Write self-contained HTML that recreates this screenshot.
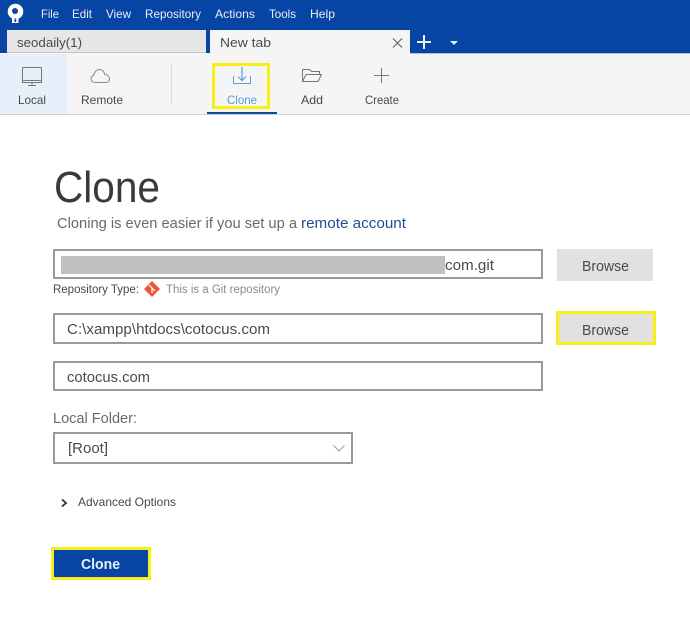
<!DOCTYPE html>
<html lang="en">
<head>
<meta charset="utf-8">
<title>Clone</title>
<style>
html,body{margin:0;padding:0;background:#fff;width:690px;height:618px;overflow:hidden}
svg{display:block}
text{font-family:"Liberation Sans",sans-serif}
</style>
</head>
<body>
<svg width="690" height="618" viewBox="0 0 690 618" xmlns="http://www.w3.org/2000/svg">
<rect width="690" height="618" fill="#fff"/>
<!-- title bar -->
<rect width="690" height="53" fill="#0645a3"/>
<path d="M12 23H18.500V17H12Z" fill="#fff"/>
<circle cx="15.500" cy="11.500" r="7.800" fill="#fff"/>
<circle cx="15" cy="11" r="3" fill="#0645a3"/>
<rect x="14.500" y="18.500" width="1.700" height="3.500" fill="#0645a3"/>
<g fill="#e8eef8" font-size="12">
<text x="41" y="18" textLength="18" lengthAdjust="spacingAndGlyphs">File</text>
<text x="72" y="18" textLength="20" lengthAdjust="spacingAndGlyphs">Edit</text>
<text x="106" y="18" textLength="25" lengthAdjust="spacingAndGlyphs">View</text>
<text x="145" y="18" textLength="56" lengthAdjust="spacingAndGlyphs">Repository</text>
<text x="215" y="18" textLength="40" lengthAdjust="spacingAndGlyphs">Actions</text>
<text x="269" y="18" textLength="27" lengthAdjust="spacingAndGlyphs">Tools</text>
<text x="310" y="18" textLength="25" lengthAdjust="spacingAndGlyphs">Help</text>
</g>
<!-- tabs -->
<rect x="7" y="30" width="199" height="23" fill="#e6e6e6"/>
<rect x="7" y="52" width="199" height="1" fill="#c4c4c4"/>
<text x="17" y="47" font-size="13" fill="#4a4a4a" textLength="65" lengthAdjust="spacingAndGlyphs">seodaily(1)</text>
<rect x="210" y="30" width="200" height="24" fill="#f5f5f6"/>
<text x="220" y="47" font-size="13" fill="#4a4a4a" textLength="51" lengthAdjust="spacingAndGlyphs">New tab</text>
<path d="M393 38.500L402 47.500M402 38.500L393 47.500" stroke="#666" stroke-width="1.200" fill="none"/>
<path d="M424 35V49M417 42H431" stroke="#e8f0fa" stroke-width="2" fill="none"/>
<path d="M450 41H458L454 45Z" fill="#e8f0fa"/>
<!-- toolbar -->
<rect y="53" width="690" height="61" fill="#f5f5f6"/>
<rect x="410" y="53" width="280" height="1" fill="#a9c0e0"/>
<rect y="114" width="690" height="1" fill="#cfcfcf"/>
<rect y="54" width="67" height="60" fill="#e6f0fa"/>
<rect x="171" y="63" width="1" height="42" fill="#dcdcdc"/>
<!-- Local icon -->
<g fill="none" stroke="#777" stroke-width="1">
<rect x="22.500" y="67.500" width="19" height="15"/>
<path d="M22.500 80.500H41.500M32 83V85M28 85.500H36"/>
</g>
<!-- Remote icon -->
<path d="M95 82.500C92.500 82.500 91 80.500 91 78.500C91 76.500 92.500 75.500 93.500 75.500C94.500 71.500 97 69.500 99.500 69.500C102.500 69.500 104 72 104.800 74.500C107.500 74.500 109.500 76.500 109.500 79C109.500 81.500 107.500 82.500 105.500 82.500Z" fill="none" stroke="#888" stroke-width="1"/>
<!-- Clone icon -->
<path d="M242 67V80M238 76.500L242 80.500L246 76.500" fill="none" stroke="#5a9fdc" stroke-width="1.200"/>
<path d="M233.500 76V83.500H250.500V76" fill="none" stroke="#5a9fdc" stroke-width="1"/>
<!-- Add icon -->
<path d="M302.500 81.500V69.500H309.500L311.500 71.500H319.500V74.500M302.500 81.500L306 74.500H321.500L318 81.500Z" fill="none" stroke="#777" stroke-width="1"/>
<!-- Create icon -->
<path d="M381.500 68V83M374 75.500H389" fill="none" stroke="#777" stroke-width="1"/>
<rect x="213.500" y="64.500" width="55" height="43" fill="none" stroke="#f8ee1a" stroke-width="3"/>
<rect x="207" y="112" width="70" height="2" fill="#0b4a9e"/>
<g font-size="12" fill="#484848">
<text x="18" y="104" textLength="28" lengthAdjust="spacingAndGlyphs">Local</text>
<text x="81" y="104" textLength="42" lengthAdjust="spacingAndGlyphs">Remote</text>
<text x="227" y="104" fill="#5b9bd5" textLength="30" lengthAdjust="spacingAndGlyphs">Clone</text>
<text x="301" y="104" textLength="22" lengthAdjust="spacingAndGlyphs">Add</text>
<text x="365" y="104" textLength="34" lengthAdjust="spacingAndGlyphs">Create</text>
</g>
<!-- heading -->
<text x="54" y="202" font-size="44" fill="#3a3a3a" textLength="106" lengthAdjust="spacingAndGlyphs">Clone</text>
<text x="57" y="228" font-size="15" fill="#6a6a6a" textLength="240" lengthAdjust="spacingAndGlyphs">Cloning is even easier if you set up a</text>
<text x="301" y="228" font-size="15" fill="#1f4e8c" textLength="105" lengthAdjust="spacingAndGlyphs">remote account</text>
<!-- input 1 -->
<rect x="54" y="250" width="488" height="28" fill="#fff" stroke="#999" stroke-width="2"/>
<rect x="61" y="256" width="384" height="18" fill="#c0c0c0"/>
<text x="445" y="270" font-size="15" fill="#4a4a4a" textLength="49" lengthAdjust="spacingAndGlyphs">com.git</text>
<rect x="557" y="249" width="96" height="32" fill="#e1e1e1"/>
<text x="582" y="271" font-size="15" fill="#4a4a4a" textLength="47" lengthAdjust="spacingAndGlyphs">Browse</text>
<!-- repo type -->
<text x="53" y="293" font-size="11.500" fill="#484848" textLength="86" lengthAdjust="spacingAndGlyphs">Repository Type:</text>
<path d="M152 281L160 289L152 297L144 289Z" fill="#e9573c"/>
<path d="M149 285L155 291M152 288V293" stroke="#fff" stroke-width="1.200" fill="none"/>
<text x="166" y="293" font-size="11.500" fill="#8a8a8a" textLength="114" lengthAdjust="spacingAndGlyphs">This is a Git repository</text>
<!-- input 2 -->
<rect x="54" y="314" width="488" height="29" fill="#fff" stroke="#999" stroke-width="2"/>
<text x="67" y="334" font-size="15" fill="#4a4a4a" textLength="203" lengthAdjust="spacingAndGlyphs">C:\xampp\htdocs\cotocus.com</text>
<rect x="557.500" y="312.500" width="97" height="31" fill="#e1e1e1" stroke="#f8ee1a" stroke-width="3"/>
<text x="582" y="335" font-size="15" fill="#4a4a4a" textLength="47" lengthAdjust="spacingAndGlyphs">Browse</text>
<!-- input 3 -->
<rect x="54" y="362" width="488" height="28" fill="#fff" stroke="#999" stroke-width="2"/>
<text x="67" y="382" font-size="15" fill="#4a4a4a" textLength="83" lengthAdjust="spacingAndGlyphs">cotocus.com</text>
<!-- local folder -->
<text x="53" y="423" font-size="14.500" fill="#6a6a6a" textLength="84" lengthAdjust="spacingAndGlyphs">Local Folder:</text>
<rect x="54" y="433" width="298" height="30" fill="#fff" stroke="#999" stroke-width="2"/>
<text x="68" y="453" font-size="15" fill="#4a4a4a" textLength="40" lengthAdjust="spacingAndGlyphs">[Root]</text>
<path d="M333.500 445.500L339 451L344.500 445.500" fill="none" stroke="#999" stroke-width="1"/>
<!-- advanced -->
<path d="M62 499.500L66 503L62 506.500" fill="none" stroke="#333" stroke-width="1.800"/>
<text x="78" y="506" font-size="12" fill="#484848" textLength="98" lengthAdjust="spacingAndGlyphs">Advanced Options</text>
<!-- clone button -->
<rect x="52.500" y="548.500" width="97" height="30" fill="#0645a3" stroke="#f8ee1a" stroke-width="3"/>
<text x="81" y="569" font-size="14.500" font-weight="bold" fill="#e8f0fa" textLength="39" lengthAdjust="spacingAndGlyphs">Clone</text>
</svg>
</body>
</html>
